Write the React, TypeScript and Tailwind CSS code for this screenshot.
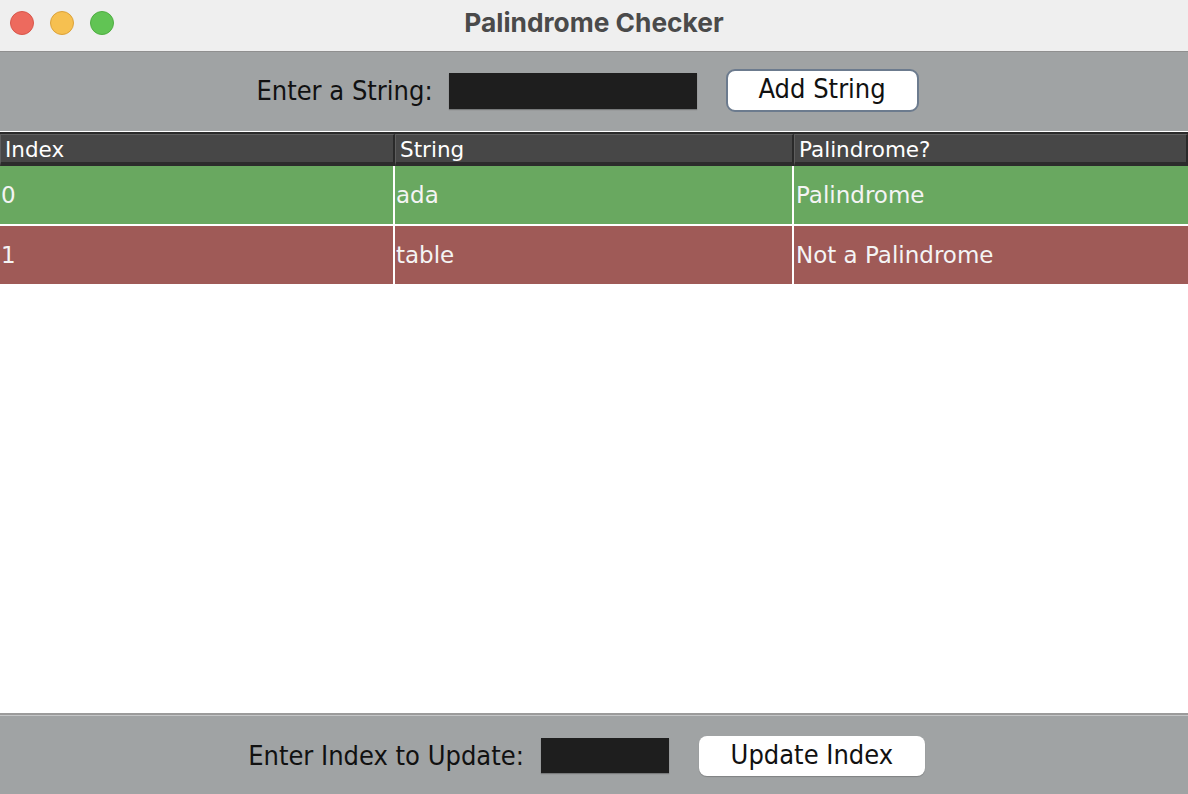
import React, { useState } from "react";

type Row = { index: number; value: string; palindrome: boolean };

const ROWS: Row[] = [
  { index: 0, value: "ada", palindrome: true },
  { index: 1, value: "table", palindrome: false },
];

const COLS = ["Index", "String", "Palindrome?"];

function TrafficLights() {
  return (
    <div className="absolute left-[10px] top-[11px] flex gap-[16px]">
      <span className="w-[24px] h-[24px] rounded-full bg-[#ed6a5e] border border-[#d8574b]" />
      <span className="w-[24px] h-[24px] rounded-full bg-[#f6c050] border border-[#dca23a]" />
      <span className="w-[24px] h-[24px] rounded-full bg-[#61c454] border border-[#4fae42]" />
    </div>
  );
}

function HeaderCell({ label }: { label: string }) {
  return (
    <div className="h-full flex items-end pl-[4px] bg-[#474747] border-t border-l border-t-[#606060] border-l-[#5e5e5e] border-b-[4px] border-b-[#2c2c2c] border-r-[2px] border-r-[#2a2a2a] text-white text-[21.5px] leading-[24px]">
      {label}
    </div>
  );
}

export default function App() {
  const [text, setText] = useState("");
  const [idx, setIdx] = useState("");

  return (
    <div className="w-[1188px] h-[794px] flex flex-col bg-white overflow-hidden font-['DejaVu_Sans',sans-serif]">
      <div className="relative h-[52px] shrink-0 bg-[#efefef] border-b border-[#8f8f8f] flex items-center justify-center pb-[5px]">
        <TrafficLights />
        <span className="text-[26.3px] font-bold text-[#4a4a4a] font-['Inter',sans-serif]">
          Palindrome Checker
        </span>
      </div>

      <div className="h-[79px] shrink-0 bg-[#a0a3a4] flex items-center justify-center pb-[3px] pr-[13px]">
        <span className="text-[27px] text-[#111] [font-stretch:condensed] mr-[16px] mt-[2px]">
          Enter a String:
        </span>
        <input
          value={text}
          onChange={(e) => setText(e.target.value)}
          className="w-[248px] h-[36px] bg-[#1e1e1e] shadow-[0_1px_1px_rgba(0,0,0,0.25)] outline-none text-white px-2 mr-[29px] mt-[2px]"
        />
        <button className="w-[193px] h-[43px] bg-white rounded-[9px] border-2 border-[#6c7b8e] text-[27px] text-[#111] [font-stretch:condensed] leading-none pb-[3px]">
          Add String
        </button>
      </div>

      <div className="h-[1px] shrink-0 bg-white" />

      <div className="h-[34px] shrink-0 grid grid-cols-[395px_399px_1fr] border-t-2 border-[#2a2a2a]">
        {COLS.map((c) => (
          <HeaderCell key={c} label={c} />
        ))}
      </div>

      <div className="flex flex-col">
        {ROWS.map((r) => (
          <div
            key={r.index}
            className={`h-[60px] grid grid-cols-[395px_399px_1fr] border-b-2 border-white text-[23px] text-[#f4f4f4] ${
              r.palindrome ? "bg-[#69a860]" : "bg-[#9f5a57]"
            }`}
          >
            <div className="flex items-center pl-[1px] pt-[1px] border-r-2 border-white">{r.index}</div>
            <div className="flex items-center pl-[1px] pt-[1px] border-r-2 border-white">{r.value}</div>
            <div className="flex items-center pl-[2px] pt-[1px]">
              {r.palindrome ? "Palindrome" : "Not a Palindrome"}
            </div>
          </div>
        ))}
      </div>

      <div className="flex-1" />

      <div className="h-[3px] shrink-0 bg-[#9b9b9b] border-b border-[#c4c6c7]" />
      <div className="h-[78px] shrink-0 bg-[#a0a3a4] flex items-center justify-center pt-[1px] pr-[15px]">
        <span className="text-[27px] text-[#111] [font-stretch:condensed] mr-[17px] mt-[2px]">
          Enter Index to Update:
        </span>
        <input
          value={idx}
          onChange={(e) => setIdx(e.target.value)}
          className="w-[128px] h-[35px] bg-[#1e1e1e] shadow-[0_1px_1px_rgba(0,0,0,0.25)] outline-none text-white px-2 mr-[30px]"
        />
        <button className="w-[226px] h-[40px] bg-white rounded-[8px] shadow-[0_1px_1px_rgba(0,0,0,0.2)] text-[27px] text-[#111] [font-stretch:condensed] leading-none pb-[3px]">
          Update Index
        </button>
      </div>
    </div>
  );
}
